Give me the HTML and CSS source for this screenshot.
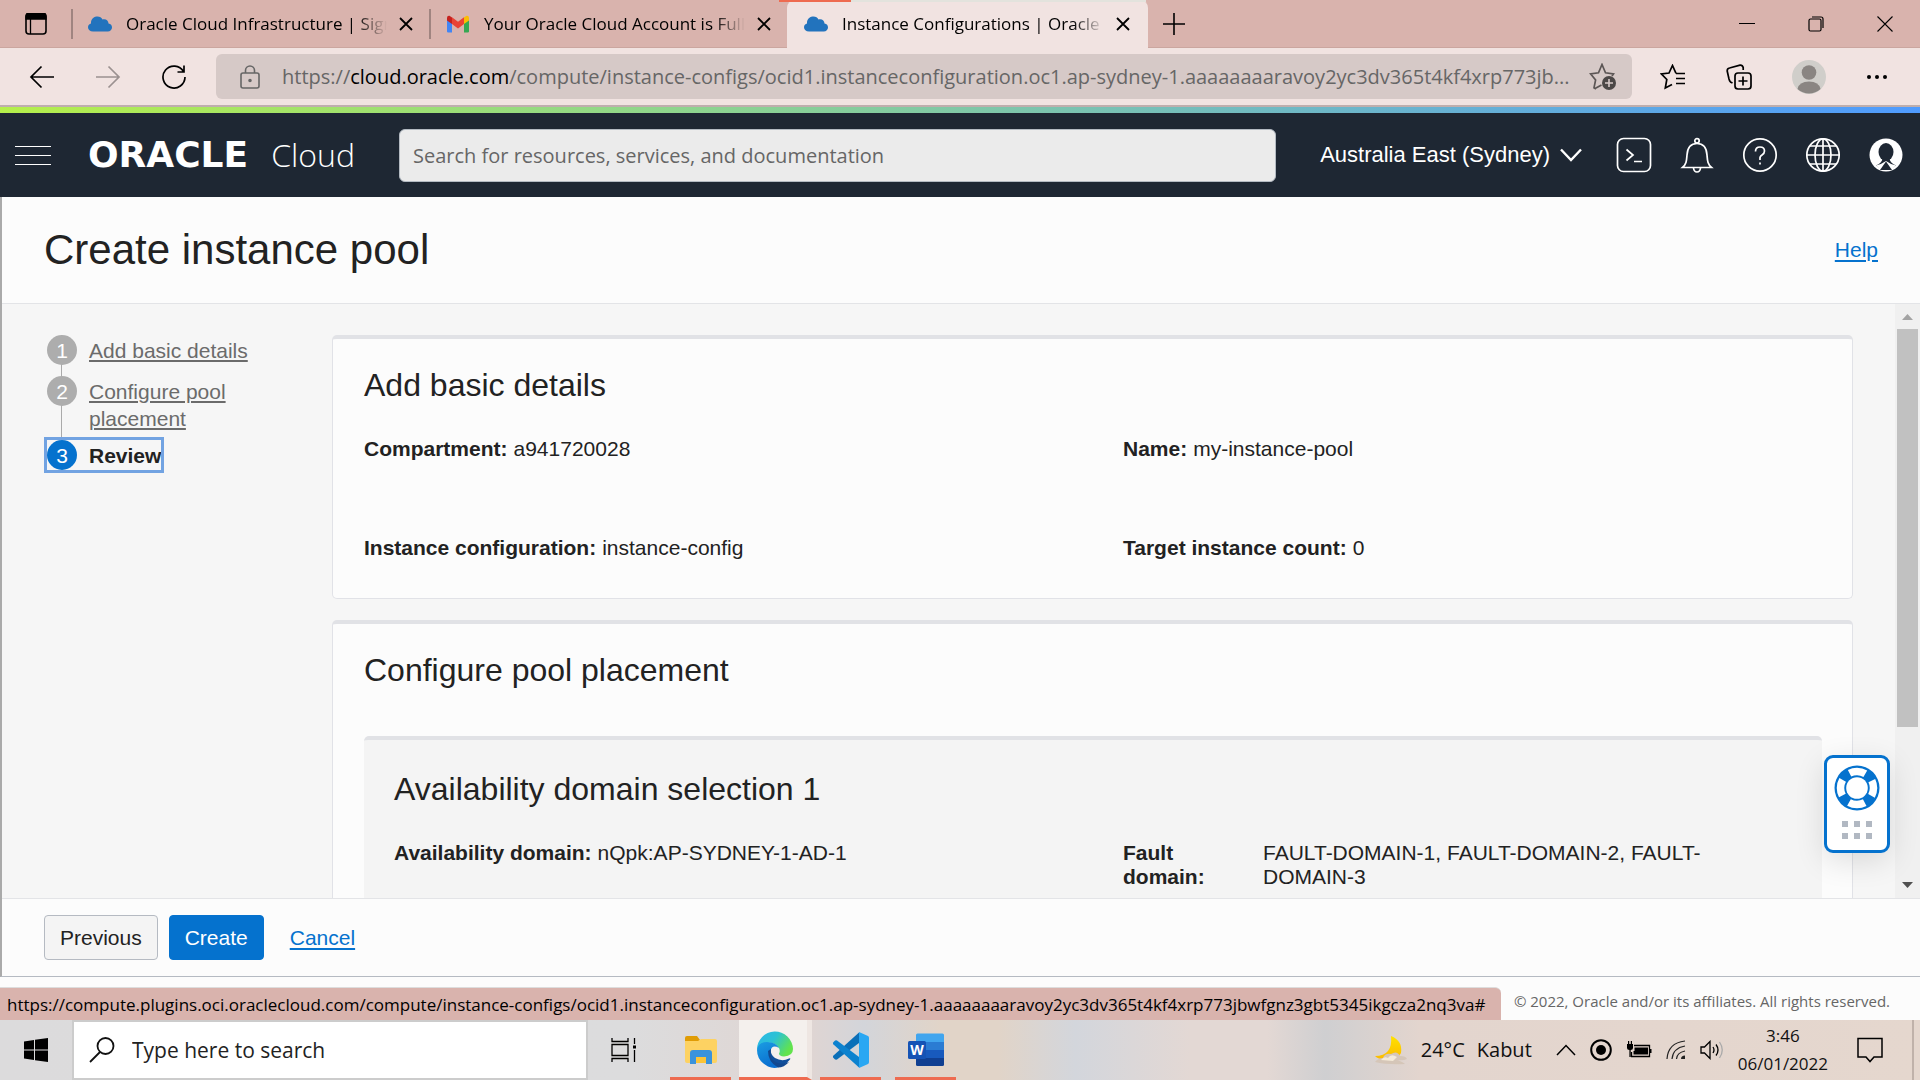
FILE: index.html
```html
<!DOCTYPE html>
<html lang="en">
<head>
<meta charset="utf-8">
<title>Instance Configurations | Oracle Cloud Infrastructure</title>
<link rel="stylesheet" href="styles.css">
</head>
<body>
<svg class="defs" aria-hidden="true">
  <symbol id="cloud" viewBox="0 0 24 16"><path d="M5 15.500C2 15.500 0 14 0 11.300C0 9 1.500 7.800 3 7.500C2.800 3.800 5 1 8.500 .6C11.500 .3 13.500 1.500 14.500 3.400C18 2.500 20.500 4.600 20.500 7.600C22.800 8 24 9.500 24 11.600C24 14 22.200 15.500 19.800 15.500Z" fill="#2273bd"/></symbol>
  <symbol id="cross" viewBox="0 0 14 14"><path d="M1 1L13 13M13 1L1 13" stroke="currentColor" stroke-width="1.800" fill="none"/></symbol>
</svg>

<header class="tabstrip">
  <button class="tab-menu" aria-label="Tab actions"><svg width="22" height="22" viewBox="0 0 22 22"><rect x="1" y="1" width="20" height="20" rx="3" fill="none" stroke="#000" stroke-width="1.600"/><path d="M1 3Q1 0 4 0H18Q21 0 21 3V6H1ZM5.500 6V21" stroke="#000" stroke-width="1.300"/></svg></button>
  <div class="tab">
    <svg class="favicon" width="24" height="16"><use href="#cloud"/></svg>
    <span class="tab-title">Oracle Cloud Infrastructure | Sign In</span>
    <button class="tab-close" aria-label="Close tab"><svg width="14" height="14"><use href="#cross"/></svg></button>
  </div>
  <div class="tab">
    <svg class="favicon" width="24" height="18" viewBox="0 0 24 18"><path d="M1 3V16.500Q1 17.500 2.200 17.500H6V7Z" fill="#4285f4"/><path d="M23 3V16.500Q23 17.500 21.800 17.500H18V7Z" fill="#34a853"/><path d="M18 2.500L20.500 .7Q23 .3 23 3V5.500L18 9Z" fill="#fbbc04"/><path d="M6 2.500L3.500 .7Q1 .3 1 3V5.500L6 9Z" fill="#c5221f"/><path d="M6 2.200L12 6.800L18 2.200V9L12 13.500L6 9Z" fill="#ea4335"/></svg>
    <span class="tab-title">Your Oracle Cloud Account is Fully Provisioned</span>
    <button class="tab-close" aria-label="Close tab"><svg width="14" height="14"><use href="#cross"/></svg></button>
  </div>
  <div class="tab tab-active">
    <svg class="favicon" width="24" height="16"><use href="#cloud"/></svg>
    <span class="tab-title">Instance Configurations | Oracle Cloud</span>
    <button class="tab-close" aria-label="Close tab"><svg width="14" height="14"><use href="#cross"/></svg></button>
    <span class="share-bar"></span>
  </div>
  <button class="new-tab" aria-label="New tab"><svg width="22" height="22" viewBox="0 0 22 22"><path d="M11 0V22M0 11H22" stroke="#000" stroke-width="1.600"/></svg></button>
  <div class="window-controls">
    <button aria-label="Minimize"><svg width="16" height="16" viewBox="0 0 16 16"><path d="M0 7.500H16" stroke="#000"/></svg></button>
    <button aria-label="Restore"><svg width="16" height="16" viewBox="0 0 16 16" fill="none" stroke="#000" stroke-width="1.200"><rect x="1" y="3" width="12" height="12" rx="1.500"/><path d="M4 1H13Q15 1 15 3V12"/></svg></button>
    <button aria-label="Close"><svg width="16" height="16" viewBox="0 0 16 16"><path d="M.5 .5L15.500 15.500M15.500 .5L.5 15.500" stroke="#000" stroke-width="1.100"/></svg></button>
  </div>
</header>

<nav class="toolbar" aria-label="Browser">
  <button aria-label="Back"><svg width="26" height="26" viewBox="0 0 26 26" fill="none" stroke="#000" stroke-width="1.700"><path d="M25 13H2M12.500 2.500L2 13L12.500 23.500"/></svg></button>
  <button aria-label="Forward"><svg width="26" height="26" viewBox="0 0 26 26" fill="none" stroke="#9b9190" stroke-width="1.700"><path d="M1 13H24M13.500 2.500L24 13L13.500 23.500"/></svg></button>
  <button aria-label="Reload"><svg width="26" height="26" viewBox="0 0 26 26" fill="none" stroke="#000" stroke-width="1.700"><path d="M22.500 7.500A11 11 0 1 0 24 13M23 1.500V8H16.500"/></svg></button>
  <div class="address">
    <svg width="20" height="24" viewBox="0 0 20 24" fill="none" stroke="#666" stroke-width="1.600"><rect x="1" y="8" width="18" height="15" rx="2"/><path d="M5.500 8V5.500A4.500 4.500 0 0 1 14.500 5.500V8"/><circle cx="10" cy="15.500" r="1" fill="#666"/></svg>
    <div class="url" role="textbox" aria-label="Address">https://<b>cloud.oracle.com</b>/compute/instance-configs/ocid1.instanceconfiguration.oc1.ap-sydney-1.aaaaaaaaravoy2yc3dv365t4kf4xrp773jb...</div>
    <button aria-label="Add to favorites"><svg width="28" height="28" viewBox="0 0 28 28"><path d="M7 26L5 24.800L6.600 17L1.500 10.800L9.500 9.800L13 1.500L16.500 9.800L24.500 10.800L23 13M6 25.500L12.500 22" fill="none" stroke="#5c5655" stroke-width="1.700"/><circle cx="20" cy="20" r="7" fill="#4c4847"/><path d="M20 16V24M16 20H24" stroke="#d6c9c7" stroke-width="1.600"/></svg></button>
  </div>
  <div class="toolbar-end">
    <button aria-label="Favorites"><svg width="26" height="26" viewBox="0 0 26 26" fill="none" stroke="#000" stroke-width="1.700"><path d="M15.500 9H15.800L12.500 1.500L9 9L1.500 10L6.800 15.500L5.300 24L12 20.500M16 9.500H25M16 14.500H25M16 19.500H25"/></svg></button>
    <button aria-label="Collections"><svg width="26" height="26" viewBox="0 0 26 26" fill="none" stroke="#000" stroke-width="1.700"><rect x="9" y="9" width="16" height="16" rx="3"/><path d="M17 12.500V21.500M12.500 17H21.500M6.500 19L4.500 18Q3.500 17 3 15L1.200 7Q1 4.500 3.500 4L14 1.200Q16.500 1 17.200 3.500V6"/></svg></button>
    <button aria-label="Profile"><svg width="34" height="34" viewBox="0 0 34 34"><circle cx="17" cy="17" r="17" fill="#d0ceca"/><circle cx="17" cy="12.500" r="7.300" fill="#8a8582"/><path d="M5.500 29Q7 21.500 17 21.500T28.500 29A17 17 0 0 1 5.500 29Z" fill="#8a8582"/></svg></button>
    <button aria-label="Settings and more"><svg width="22" height="6" viewBox="0 0 22 6"><circle cx="3" cy="3" r="2"/><circle cx="11" cy="3" r="2"/><circle cx="19" cy="3" r="2"/></svg></button>
  </div>
</nav>

<header class="console">
  <button class="menu" aria-label="Navigation menu"><span></span><span></span><span></span></button>
  <a class="brand" href="#"><span class="brand-name">ORACLE</span><span class="brand-product">Cloud</span></a>
  <input class="console-search" type="search" placeholder="Search for resources, services, and documentation" aria-label="Search">
  <button class="region">Australia East (Sydney) <svg width="22" height="14" viewBox="0 0 22 14"><path d="M1 1.500L11 12L21 1.500" fill="none" stroke="#fff" stroke-width="2.400"/></svg></button>
  <div class="console-icons">
    <button aria-label="Cloud Shell"><svg width="36" height="36" viewBox="0 0 36 36" fill="none" stroke="#fff" stroke-width="1.700"><rect x="1.500" y="1.500" width="33" height="33" rx="6"/><path d="M10.500 12.500L17 18L10.500 23.500M18 24.500H26"/></svg></button>
    <button aria-label="Announcements"><svg width="36" height="36" viewBox="0 0 36 36" fill="none" stroke="#fff" stroke-width="1.700"><path d="M3.500 30.500C7.500 27 7.500 24 8 18C8.500 10 12 6.500 18 6.500S27.500 10 28 18C28.500 24 28.500 27 32.500 30.500Z"/><circle cx="18" cy="3.800" r="2.200"/><path d="M14.500 31Q15 35 18 35T21.500 31"/></svg></button>
    <button aria-label="Help menu"><svg width="36" height="36" viewBox="0 0 36 36" fill="none" stroke="#fff" stroke-width="1.700"><circle cx="18" cy="18" r="16.200"/><path d="M13.500 14.500Q13.500 10 18 10T22.500 14Q22.500 16.500 20 18T18 22V23M18 25.500V27.500"/></svg></button>
    <button aria-label="Language"><svg width="36" height="36" viewBox="0 0 36 36" fill="none" stroke="#fff" stroke-width="1.700"><circle cx="18" cy="18" r="16.200"/><ellipse cx="18" cy="18" rx="8" ry="16.200"/><path d="M18 1.500V34.500M1.500 18H34.500M4.500 9H31.500M4.500 27H31.500"/></svg></button>
    <button aria-label="Profile menu"><svg width="36" height="36" viewBox="0 0 36 36"><circle cx="18" cy="18" r="16.500" fill="#fff"/><ellipse cx="18" cy="15" rx="7.500" ry="9" fill="#1e2733"/><path d="M14.500 22H21.500Q22.500 26 28 28.500Q24 32 18 32T8 28.500Q13.500 26 14.500 22Z" fill="#1e2733"/><path d="M8 28.500Q14 27 18 24Q22 27 28 28.500Q24 33 18 33T8 28.500Z" fill="#fff"/><path d="M18 24.500L24 33H12Z" fill="#1e2733"/></svg></button>
  </div>
</header>

<main class="page">
  <div class="page-head"><h1>Create instance pool</h1><a href="#">Help</a></div>
  <div class="workspace">
    <ol class="steps">
      <li><a href="#"><span class="num">1</span><span class="step-label">Add basic details</span></a></li>
      <li><a href="#"><span class="num">2</span><span class="step-label">Configure pool placement</span></a></li>
      <li class="current"><a href="#" aria-current="step"><span class="num">3</span><span class="step-label">Review</span></a></li>
    </ol>
    <div class="review">
      <section class="card">
        <h2>Add basic details</h2>
        <dl class="facts">
          <div><dt>Compartment:</dt><dd>a941720028</dd></div>
          <div><dt>Name:</dt><dd>my-instance-pool</dd></div>
          <div><dt>Instance configuration:</dt><dd>instance-config</dd></div>
          <div><dt>Target instance count:</dt><dd>0</dd></div>
        </dl>
      </section>
      <section class="card">
        <h2>Configure pool placement</h2>
        <section class="subcard">
          <h2>Availability domain selection 1</h2>
          <dl class="facts">
            <div><dt>Availability domain:</dt><dd>nQpk:AP-SYDNEY-1-AD-1</dd></div>
            <div class="split"><dt>Fault domain:</dt><dd>FAULT-DOMAIN-1, FAULT-DOMAIN-2, FAULT-DOMAIN-3</dd></div>
          </dl>
        </section>
      </section>
    </div>
    <div class="scrollbar" aria-hidden="true">
      <svg width="25" height="25" viewBox="0 0 25 25"><path d="M7 16L12.500 10L18 16Z" fill="#a3a3a3"/></svg>
      <div class="thumb"></div>
      <svg width="25" height="25" viewBox="0 0 25 25"><path d="M7 9L12.500 15L18 9Z" fill="#505050"/></svg>
    </div>
    <button class="support" aria-label="Support">
      <svg width="46" height="46" viewBox="0 0 46 46"><circle cx="23" cy="23" r="22.500" fill="#0572ce"/><circle cx="23" cy="23" r="16.500" fill="none" stroke="#fff" stroke-width="7.500" stroke-dasharray="16.400 9.518" stroke-dashoffset="8.200"/><circle cx="23" cy="23" r="10.800" fill="#fff"/></svg>
      <svg width="30" height="18" viewBox="0 0 30 18" fill="#b1b8c2"><path d="M0 0H6V6H0ZM12 0H18V6H12ZM24 0H30V6H24ZM0 12H6V18H0ZM12 12H18V18H12ZM24 12H30V18H24Z"/></svg>
    </button>
  </div>
  <div class="actions"><button class="btn">Previous</button><button class="btn primary">Create</button><a href="#">Cancel</a></div>
</main>

<footer class="legal">
  <span>© 2022, Oracle and/or its affiliates. All rights reserved.</span>
  <div class="status">https://compute.plugins.oci.oraclecloud.com/compute/instance-configs/ocid1.instanceconfiguration.oc1.ap-sydney-1.aaaaaaaaravoy2yc3dv365t4kf4xrp773jbwfgnz3gbt5345ikgcza2nq3va#</div>
</footer>

<footer class="taskbar">
  <button class="start" aria-label="Start"><svg width="24" height="24" viewBox="0 0 24 24"><path d="M0 3.500L10 2V11.500H0ZM11 1.800L24 0V11.500H11ZM0 12.500H10V22L0 20.500ZM11 12.500H24V24L11 22.200Z"/></svg></button>
  <label class="task-search"><svg width="26" height="26" viewBox="0 0 26 26" fill="none" stroke="#111" stroke-width="1.800"><circle cx="16.500" cy="9" r="8"/><path d="M11 15L1 25"/></svg><input type="text" placeholder="Type here to search" aria-label="Type here to search"></label>
  <button class="task-view" aria-label="Task view"><svg width="26" height="26" viewBox="0 0 26 26" fill="none" stroke="#000" stroke-width="1.300"><path d="M1 1V4.500H17V1M1 25V21.500H17V25M1 7.500H17V18.500H1ZM23.500 1V7M23.500 13V25"/><path d="M22 8.500H25V11.500H22Z" fill="#000" stroke="none"/></svg></button>
  <div class="apps">
    <button class="app" aria-label="File Explorer"><svg width="36" height="36" viewBox="0 0 36 36"><path d="M2 6Q2 4 4 4H14L17 8L14 12H2Z" fill="#e09c05"/><path d="M2 9H15L18 7H32Q34 7 34 9V29Q34 31 32 31H4Q2 31 2 29Z" fill="#fdd262"/><path d="M7 32V21Q7 18 10 18H26Q29 18 29 21V32H23V25H13V32Z" fill="#3a93dc"/><path d="M13 25H23V31H13Z" fill="#fcc436"/></svg></button>
    <button class="app app-active" aria-label="Microsoft Edge"><svg width="38" height="38" viewBox="0 0 38 38"><defs><linearGradient id="e1" x1="0" y1="0" x2="1" y2=".5"><stop offset="0" stop-color="#2cb6ea"/><stop offset=".5" stop-color="#2cc2d4"/><stop offset="1" stop-color="#62e34c"/></linearGradient><linearGradient id="e2" x1="0" y1="0" x2=".4" y2="1"><stop offset="0" stop-color="#1b9de2"/><stop offset="1" stop-color="#0a6fd0"/></linearGradient></defs><path d="M1 19A18 18 0 0 1 37 18Q37 25 28 25.500Q23 25 23 22.500Q24.500 20 23 17Q19 11 11 12Q4 13.500 1 19Z" fill="url(#e1)"/><path d="M1 19Q2 11 11 11Q20 11 23 17Q16 13 14.500 20Q14 30 23 36Q18 38 12 35.500Q1 30 1 19Z" fill="url(#e2)"/><path d="M15 18Q12 23 16 29Q20 34 27 34Q31 32.500 34 28.500Q35 26.500 33 27.500Q26 31 19 27Q14 23.500 15 18Z" fill="#104f9b"/><path d="M12 20Q12 31 22 36.500Q28 36.500 33 31Q24 35 18 30Q13 26 15 18Z" fill="#12488f"/></svg></button>
    <button class="app" aria-label="Visual Studio Code"><svg width="38" height="38" viewBox="0 0 38 38"><path d="M27 1.500V12L5 28.500Q3.500 29 2.500 28L1.200 26.500Q.5 25.500 1.500 24.500Z" fill="#0a6fb8"/><path d="M27 36.500V26L5 9.500Q3.500 9 2.500 10L1.200 11.500Q.5 12.500 1.500 13.500Z" fill="#0c82cf"/><path d="M27 1L36 5Q37 5.500 37 7V31Q37 32.500 36 33L27 37Z" fill="#29a7f3"/></svg></button>
    <button class="app" aria-label="Word"><svg width="38" height="38" viewBox="0 0 38 38"><path d="M9 4Q9 2.500 10.500 2.500H35.500Q37 2.500 37 4V11H9Z" fill="#41a5ee"/><path d="M9 11H37V19H9Z" fill="#2b7cd3"/><path d="M9 19H37V27H9Z" fill="#185abd"/><path d="M9 27H37V33.500Q37 35 35.500 35H10.500Q9 35 9 33.500Z" fill="#103f91"/><rect x="1" y="10" width="18" height="18" rx="1.500" fill="#1553b5"/><text x="10" y="24" text-anchor="middle" class="word-letter">W</text></svg></button>
  </div>
  <div class="tray">
    <button class="weather"><svg width="36" height="30" viewBox="0 0 36 30"><defs><linearGradient id="moon" x1="0" y1="0" x2="0" y2="1"><stop offset="0" stop-color="#ffe200"/><stop offset="1" stop-color="#fbb900"/></linearGradient></defs><path d="M18 1Q30 6 28 18Q24 26 12 25Q5 24 2 21Q20 21 18 1Z" fill="url(#moon)"/><path d="M2 27Q5 23 10 23Q12 18 18 19Q24 15 27 21Q33 21 34 24Q30 26 24 25Q30 27 32 29Q14 30 2 27Z" fill="#d5c6b8"/><path d="M8 25Q11 21 15 23Q18 18 24 22L20 26Z" fill="#f4ead8"/></svg><span>24°C</span><span>Kabut</span></button>
    <button aria-label="Show hidden icons"><svg width="20" height="12" viewBox="0 0 20 12"><path d="M1 11L10 1.500L19 11" fill="none" stroke="#000" stroke-width="1.500"/></svg></button>
    <svg width="22" height="22" viewBox="0 0 22 22"><circle cx="11" cy="11" r="9.800" fill="none" stroke="#000" stroke-width="2"/><circle cx="11" cy="11" r="5"/></svg>
    <svg width="26" height="20" viewBox="0 0 26 20"><path d="M8 5.500H23.500V16.500H5.500V12" fill="none" stroke="#000" stroke-width="1.300"/><path d="M8.500 7.500H22V14.500H7.500V11H8.500ZM24 9H25.500V13H24ZM1 4H7V8Q7 10 4.700 10V17H3.400V10Q1 10 1 8ZM2 1H3.200V4H2ZM4.800 1H6V4H4.800Z"/></svg>
    <svg width="20" height="20" viewBox="0 0 20 20" fill="none" stroke="#222" stroke-width="1.200"><path d="M1 19Q2 3 19 1M6 19Q7 8 19 6M10.500 19Q11 12.500 19 11"/><path d="M15 19Q15 15.500 19 15.500V19Z" fill="#222" stroke="none"/></svg>
    <svg width="24" height="20" viewBox="0 0 24 20" fill="none" stroke="#000" stroke-width="1.300"><path d="M1 7H4.500L10 1.500V18.500L4.500 13H1ZM13 7Q15 10 13 13M16 4.500Q20 10 16 15.500"/><path d="M19.500 2Q25 10 19.500 18" stroke="#aaa"/></svg>
    <time class="clock" datetime="2022-01-06T03:46"><span>3:46</span><span>06/01/2022</span></time>
    <button class="notify" aria-label="Notifications"><svg width="26" height="26" viewBox="0 0 26 26"><path d="M1 1.500H25V20H17L13 24.500L9 20H1Z" fill="none" stroke="#000" stroke-width="1.500"/></svg></button>
  </div>
</footer>
</body>
</html>
```
FILE: styles.css
```css
* { box-sizing: border-box; }
body {
  margin: 0;
  height: 100vh;
  display: flex;
  flex-direction: column;
  overflow: hidden;
  font-family: "Liberation Sans", Arial, sans-serif;
  font-size: 21px;
  line-height: 24px;
  color: #222;
  background: #fcfcfc;
}
button { padding: 0; border: 0; background: none; font: inherit; color: inherit; }
svg { display: block; flex: none; }
h1, h2, dl, dd, ol { margin: 0; padding: 0; font-weight: 400; }
a { color: #0572ce; text-decoration-thickness: 2px; text-underline-offset: 3px; }
.defs { position: absolute; width: 0; height: 0; }

.tabstrip, .toolbar, .legal, .taskbar, .console-search { font-family: "Open Sans", "Noto Sans", sans-serif; }

/* Tab strip */
.tabstrip {
  flex: none;
  display: flex;
  align-items: center;
  height: 48px;
  padding-left: 25px;
  background: #d9b3ad;
  border-bottom: 1px solid #cba69f;
  font-size: 17px;
  color: #000;
}
.tab-menu { margin-right: 24px; }
.tab {
  position: relative;
  display: flex;
  align-items: center;
  width: 358px;
  height: 30px;
  padding: 0 16px 0 15px;
  border-left: 2px solid #a08480;
}
.tab-title {
  flex: 1;
  margin: 0 12px 0 14px;
  overflow: hidden;
  white-space: nowrap;
  mask-image: linear-gradient(to right, #000 88%, transparent);
}
.tab-active {
  align-self: stretch;
  width: 361px;
  height: 48px;
  padding: 0 18px 0 17px;
  border: 0;
  border-radius: 8px 8px 0 0;
  background: #f1e3e1;
}
.share-bar {
  position: absolute;
  top: 0;
  left: -8px;
  right: 2px;
  height: 2px;
  background: linear-gradient(to right, #ee6b50 72px, #e3e3dd 72px);
}
.new-tab { margin-left: 15px; }
.window-controls { display: flex; gap: 53px; margin: 0 27px 0 auto; }

/* Toolbar */
.toolbar {
  flex: none;
  display: flex;
  align-items: center;
  gap: 40px;
  height: 59px;
  padding: 0 32px 0 29px;
  background: #f1e3e1;
  border-bottom: 2px solid #bfaead;
  font-size: 20px;
}
.address {
  flex: 1;
  min-width: 0;
  display: flex;
  align-items: center;
  gap: 22px;
  height: 45px;
  margin-left: -11px;
  padding: 0 15px 0 24px;
  border-radius: 6px;
  background: #d6c9c7;
  color: #666;
}
.address button { margin-left: -12px; }
.url { flex: 1; min-width: 0; overflow: hidden; white-space: nowrap; }
.url b { font-weight: 400; color: #000; }
.toolbar-end { display: flex; align-items: center; gap: 40px; margin-left: -12px; }

/* Console header */
.console {
  flex: none;
  display: flex;
  align-items: center;
  height: 90px;
  padding: 0 16px 0 15px;
  border-top: 6px solid;
  border-image: linear-gradient(to right, #b5ef4b, #8fd58d 35%, #70b9c4 67%, #4f9bff) 1;
  background: #1e2733;
  color: #fff;
}
.menu { display: grid; gap: 8px; width: 36px; margin-right: 37px; }
.menu span { height: 1px; background: #fff; }
.brand { display: flex; align-items: center; justify-content: space-between; width: 267px; margin-right: 44px; color: #fff; text-decoration: none; }
.brand-name { font: 700 36px/40px "DejaVu Sans", sans-serif; }
.brand-product { font: 300 32px/40px "Open Sans", sans-serif; }
.console-search {
  flex: 1;
  min-width: 0;
  height: 53px;
  padding: 0 13px;
  border: 1px solid #b3bac2;
  border-radius: 6px;
  background: #ebebeb;
  font-size: 20px;
}
.console-search::placeholder { color: #666; opacity: 1; }
.region { display: flex; align-items: center; gap: 10px; margin: 0 34px 0 44px; font-size: 22px; white-space: nowrap; }
.console-icons { display: flex; gap: 27px; }

/* Page */
.page { flex: 1; min-height: 0; display: flex; flex-direction: column; border-left: 2px solid #aaa; border-bottom: 1px solid #b5bac2; }
.page-head {
  flex: none;
  display: flex;
  align-items: center;
  justify-content: space-between;
  height: 107px;
  padding: 0 42px;
  border-bottom: 1px solid #e3e4e7;
}
h1 { font-size: 42px; line-height: 48px; }
h2 { font-size: 32px; line-height: 36px; }
.workspace {
  position: relative;
  flex: 1;
  min-height: 0;
  display: flex;
  overflow: hidden;
  background: #f6f6f6;
}
.steps { flex: none; width: 330px; padding: 31px 75px 0 45px; list-style: none; line-height: 27px; }
.steps li { min-height: 41px; padding-bottom: 8px; background: linear-gradient(#aaa, #aaa) 14px 0 / 1px 100% no-repeat; }
.steps a { display: flex; align-items: flex-start; gap: 12px; color: #6b6b6b; text-decoration: none; }
.step-label { padding-top: 2px; text-decoration: underline; text-decoration-thickness: 2px; text-underline-offset: 2px; }
.num { flex: none; width: 30px; height: 30px; border-radius: 50%; background: #adadad; color: #fff; line-height: 31px; text-align: center; }
.steps .current { background: none; }
.current a { width: max-content; height: 30px; outline: 3px solid #72a3e2; color: #222; font-weight: 700; }
.current .num { background: #0572ce; font-weight: 400; }
.current .step-label { text-decoration: none; }

.review { flex: 1; min-width: 0; display: flex; flex-direction: column; gap: 21px; padding: 31px 42px 0 0; }
.card { flex: none; padding: 28px 30px 38px 31px; border: 1px solid #e1e2e7; border-top: 4px solid #e1e2e6; border-radius: 5px; background: #fcfcfc; }
.subcard { margin-top: 48px; padding: 31px 30px 80px; border-top: 4px solid #e1e2e6; border-radius: 5px; background: #f4f4f4; }
.facts { display: grid; grid-template-columns: 1fr 1fr; gap: 75px 60px; margin-top: 34px; }
.facts div { display: flex; gap: 6px; }
.facts dt { font-weight: 700; }
.facts .split dt { flex: none; width: 134px; padding-right: 40px; }
.facts .split dd { padding-right: 60px; }
.scrollbar { flex: none; display: flex; flex-direction: column; width: 25px; background: #f0f0f0; }
.thumb { height: 67%; margin: 0 2px auto; background: #c1c1c1; }
.support {
  position: absolute;
  right: 30px;
  bottom: 45px;
  display: grid;
  justify-items: center;
  gap: 10px;
  padding: 7px 7px 11px;
  border: 3px solid #0572ce;
  border-radius: 9px;
  background: #fff;
  box-shadow: 0 8px 30px rgba(0, 0, 0, .12);
}
.actions { flex: none; display: flex; align-items: center; gap: 11px; height: 78px; padding: 0 42px; border-top: 1px solid #e3e4e7; }
.btn { height: 45px; padding: 0 15px; border: 1px solid #b5bac2; border-radius: 4px; background: #f4f4f4; }
.primary { border-color: #0572ce; background: #0572ce; color: #fff; }
.actions a { margin-left: 15px; }

/* Page footer and link preview */
.legal { position: relative; flex: none; display: flex; justify-content: flex-end; align-items: center; height: 43px; padding: 4px 30px 0 0; font-size: 15px; color: #666; }
.status {
  position: absolute;
  left: 0;
  bottom: 0;
  height: 33px;
  padding: 0 16px 0 7px;
  border-top: 1px solid #ddd;
  border-radius: 0 6px 0 0;
  background: #d9b3ad;
  color: #000;
  font-size: 17px;
  line-height: 33px;
  white-space: nowrap;
}

/* Taskbar */
.taskbar {
  flex: none;
  display: flex;
  align-items: stretch;
  height: 60px;
  color: #111;
  background: linear-gradient(to right, #dcdbdc 0, #dcdcdd 33%, #e0d5d2 42%, #d3d5da 45%, #e1d4c8 49%, #e1d4c8 52%, #d3d6dc 56%, #e3d8d4 62%, #e3d8d4 66%, #cfcfd1 69%, #e3d5ce 74%, #e5d7ce 100%);
}
.start { width: 72px; display: grid; place-items: center; }
.task-search { display: flex; align-items: center; gap: 15px; width: 516px; padding: 0 15px; border: 2px solid #ccc; background: #fff; }
.task-search input { flex: 1; min-width: 0; border: 0; background: none; font: 21px "Open Sans", sans-serif; }
.task-search input::placeholder { color: #222; opacity: 1; }
.task-view { margin: 0 33px 0 23px; }
.apps { display: flex; gap: 14px; }
.app { width: 61px; padding-top: 3px; border-bottom: 3px solid #ee6b50; display: grid; place-items: center; }
.app-active { width: 73px; margin: 0 -6px; padding-left: 4px; border-right: 5px solid #eee6e2; background: #f4f0ed; }
.word-letter { font: 700 14px "Open Sans", sans-serif; fill: #fff; }
.tray { display: flex; align-items: center; gap: 14px; margin-left: auto; margin-right: 6px; padding-right: 29px; border-right: 2px solid #c0b2aa; }
.weather { display: flex; align-items: center; gap: 12px; margin-right: 10px; font-size: 20px; }
.clock { display: grid; gap: 4px; justify-items: center; font-size: 17px; }
.notify { margin-left: 15px; }
```
